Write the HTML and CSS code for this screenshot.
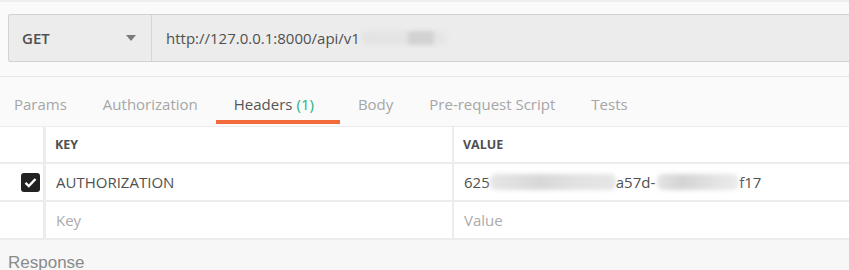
FILE: index.html
```html
<!DOCTYPE html>
<html lang="en">
<head>
    <meta charset="UTF-8">
    <title>Request</title>
    <link rel="stylesheet" href="styles.css">
</head>
<body>
    <div class="url-area">
        <div class="request-bar">
            <div class="method">
                <span>GET</span>
                <span class="caret"></span>
            </div>
            <div class="url">http://127.0.0.1:8000/api/v1<span class="blur blur-url"></span></div>
        </div>
    </div>

    <nav class="tabs">
        <span class="tab">Params</span>
        <span class="tab">Authorization</span>
        <span class="tab active">Headers <em>(1)</em></span>
        <span class="tab">Body</span>
        <span class="tab">Pre-request Script</span>
        <span class="tab">Tests</span>
    </nav>

    <div class="table">
        <div class="row head">
            <div class="check"></div>
            <div class="cell key">KEY</div>
            <div class="cell">VALUE</div>
        </div>
        <div class="row">
            <div class="check">
                <span class="box">
                    <svg width="13" height="11" viewBox="0 0 13 11"><path d="M1.5 5.8 L4.8 9 L11.5 2" fill="none" stroke="#fff" stroke-width="2.4"/></svg>
                </span>
            </div>
            <div class="cell key">AUTHORIZATION</div>
            <div class="cell">625<span class="blur blur-a"></span>a57d-<span class="blur blur-b"></span>f17</div>
        </div>
        <div class="row">
            <div class="check"></div>
            <div class="cell key placeholder">Key</div>
            <div class="cell placeholder">Value</div>
        </div>
    </div>

    <div class="response">Response</div>
</body>
</html>
```

FILE: styles.css
```css
body {
    margin: 0;
    background-color: #fafafa;
    font-family: "Open Sans", sans-serif;
    color: #505050;
    overflow: hidden;
}

.url-area {
    border-top: 2px solid #eeeeee;
    border-bottom: 1px solid #e6e6e6;
    padding: 12px 0 14px 8px;
}

.request-bar {
    display: flex;
    height: 46px;
    background-color: #ececec;
    border: 1px solid #d2d2d2;
    border-right: none;
    border-radius: 3px 0 0 3px;
}

.method {
    width: 143px;
    display: flex;
    align-items: center;
    justify-content: space-between;
    padding: 0 15px 0 13px;
    box-sizing: border-box;
    border-right: 1px solid #d6d6d6;
    font-size: 15px;
    font-weight: 600;
    color: #505050;
}

.caret {
    width: 0;
    height: 0;
    border-left: 5px solid transparent;
    border-right: 5px solid transparent;
    border-top: 6px solid #7a7a7a;
}

.url {
    display: flex;
    align-items: center;
    padding-left: 14px;
    font-size: 15px;
    color: #505050;
}

.blur {
    display: inline-block;
    filter: blur(2px);
    border-radius: 6px;
}

.blur-url {
    width: 86px;
    height: 14px;
    margin-left: 1px;
    background: linear-gradient(90deg, #e4e4e4 0 55%, #d2d2d2 55% 85%, #e6e6e6 85%);
}

.blur-a {
    width: 126px;
    height: 16px;
    background: linear-gradient(90deg, #e6e6e6, #d8d8d8 40%, #e2e2e2 70%, #e6e6e6);
}

.blur-b {
    width: 82px;
    height: 16px;
    margin-left: 2px;
    background: linear-gradient(90deg, #e4e4e4, #d4d4d4 30%, #e6e6e6 80%, #ececec);
}

.tabs {
    display: flex;
    height: 49px;
    margin-left: -4px;
    padding-bottom: 2px;
    box-sizing: border-box;
}

.tab {
    display: flex;
    align-items: center;
    padding: 10px 18px 0;
    font-size: 15px;
    color: #a6a6a6;
    border-bottom: 4px solid transparent;
}

.tab.active {
    color: #555;
    border-bottom-color: #f26b3a;
    padding-right: 26px;
}

.tab.active em {
    font-style: normal;
    color: #26b47f;
    margin-left: 4px;
}

.table {
    background-color: #fff;
    border-top: 1px solid #ececec;
}

.row {
    display: flex;
    height: 36px;
    border-bottom: 2px solid #ececec;
}

.row.head {
    height: 35px;
    font-weight: 700;
}

.check {
    width: 46px;
    border-right: 3px solid #ececec;
    display: flex;
    align-items: center;
    justify-content: flex-end;
    padding-right: 3px;
    box-sizing: border-box;
}

.box {
    width: 19px;
    height: 19px;
    background-color: #222;
    border-radius: 3px;
    display: flex;
    align-items: center;
    justify-content: center;
}

.cell {
    display: flex;
    align-items: center;
    padding-left: 10px;
    font-size: 15px;
    color: #505050;
}

.head .cell {
    font-size: 12.5px;
    color: #505050;
    padding-left: 9px;
}

.cell.key {
    width: 408px;
    box-sizing: border-box;
    border-right: 2px solid #ececec;
}

.placeholder {
    color: #ababab;
}

.response {
    background-color: #f7f7f7;
    padding: 13px 8px 0;
    font-family: "Liberation Sans", Arial, sans-serif;
    font-size: 17px;
    color: #8a8a8a;
    height: 40px;
}
```
